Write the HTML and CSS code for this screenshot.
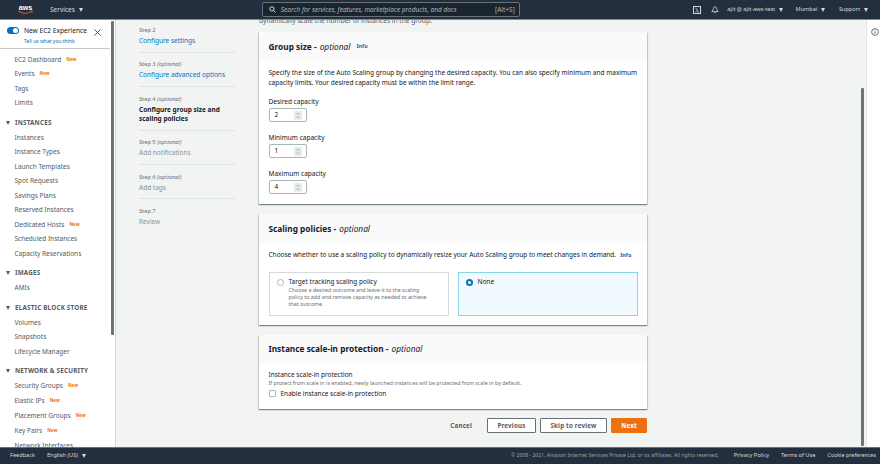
FILE: index.html
```html
<!DOCTYPE html>
<html lang="en">
<head>
<meta charset="utf-8">
<title>Create Auto Scaling group</title>
<link rel="stylesheet" href="styles.css">
</head>
<body>
<header class="topbar">
  <svg class="aws" viewBox="0 0 30 20" width="17" height="11"><text x="15" y="11" text-anchor="middle" class="aws-text">aws</text><path d="M2 13c7 5 17 5 24 .5" fill="none" stroke="#ec7211" stroke-width="1.600"/><path d="M24 12l4 .5-1.500 3.500" fill="none" stroke="#ec7211" stroke-width="1.200"/></svg>
  <span class="services">Services</span><i class="caret light"></i>
  <div class="search">
    <svg viewBox="0 0 12 12" width="7" height="7"><circle cx="5" cy="5" r="3.600" fill="none" stroke="#eee" stroke-width="1.500"/><path d="M8 8l3 3" stroke="#eee" stroke-width="1.600"/></svg>
    <span class="placeholder">Search for services, features, marketplace products, and docs</span>
    <span class="shortcut">[Alt+S]</span>
  </div>
  <div class="top-right">
    <svg viewBox="0 0 10 10" width="8" height="8"><rect x=".6" y=".6" width="8.800" height="8.800" fill="none" stroke="#d5dbdb" stroke-width="1.200"/><path d="M3 2.500l3 2.500-3 2.500M5 7.500h2.500" fill="none" stroke="#d5dbdb"/></svg>
    <svg class="bell" viewBox="0 0 10 10" width="8" height="8"><path d="M5 1C3.300 1 3 2.800 3 4L1 7h8L7 4c0-1.200-.3-3-2-3zM4 8.300h2" fill="none" stroke="#d5dbdb"/></svg>
    <span class="acct">ajit @ ajit-aws-test</span><i class="caret"></i>
    <span class="acct region">Mumbai</span><i class="caret"></i>
    <span class="acct support">Support</span><i class="caret"></i>
  </div>
</header>

<div class="body-row">
  <aside class="sidebar">
    <div class="sb-inner">
      <div class="exp">
        <div class="exp-row">
          <span class="toggle"><b></b></span>
          <span class="exp-title">New EC2 Experience</span>
          <svg class="close" viewBox="0 0 8 8" width="7" height="7"><path d="M.5 .5l7 7M7.500 .5l-7 7" stroke="#444" stroke-width="1"/></svg>
        </div>
        <a class="exp-link">Tell us what you think</a>
      </div>
      <nav class="nav">
        <a class="item">EC2 Dashboard<em>New</em></a>
        <a class="item tall">Events<em>New</em></a>
        <a class="item short">Tags</a>
        <a class="item">Limits</a>
        <h4 class="sec"><i class="caret dark"></i>INSTANCES</h4>
        <a class="item">Instances</a>
        <a class="item">Instance Types</a>
        <a class="item">Launch Templates</a>
        <a class="item">Spot Requests</a>
        <a class="item">Savings Plans</a>
        <a class="item">Reserved Instances</a>
        <a class="item">Dedicated Hosts<em>New</em></a>
        <a class="item">Scheduled Instances</a>
        <a class="item">Capacity Reservations</a>
        <h4 class="sec"><i class="caret dark"></i>IMAGES</h4>
        <a class="item">AMIs</a>
        <h4 class="sec"><i class="caret dark"></i>ELASTIC BLOCK STORE</h4>
        <a class="item">Volumes</a>
        <a class="item">Snapshots</a>
        <a class="item">Lifecycle Manager</a>
        <h4 class="sec"><i class="caret dark"></i>NETWORK &amp; SECURITY</h4>
        <a class="item tall">Security Groups<em>New</em></a>
        <a class="item tall">Elastic IPs<em>New</em></a>
        <a class="item tall">Placement Groups<em>New</em></a>
        <a class="item tall">Key Pairs<em>New</em></a>
        <a class="item">Network Interfaces</a>
      </nav>
    </div>
    <div class="sb-track"><div class="sb-thumb"></div></div>
  </aside>

  <main class="main">
    <ol class="steps">
      <li class="step"><small>Step 2</small><a class="link">Configure settings</a></li>
      <li class="step"><small>Step 3 <i>(optional)</i></small><a class="link">Configure advanced options</a></li>
      <li class="step"><small>Step 4 <i>(optional)</i></small><strong>Configure group size and scaling policies</strong></li>
      <li class="step"><small>Step 5 <i>(optional)</i></small><span class="off">Add notifications</span></li>
      <li class="step"><small>Step 6 <i>(optional)</i></small><span class="off">Add tags</span></li>
      <li class="step last"><small>Step 7</small><span class="off">Review</span></li>
    </ol>

    <div class="content">
      <p class="cut">dynamically scale the number of instances in the group.</p>

      <section class="card c1">
        <h2 class="card-h">Group size - <i>optional</i><a class="info">Info</a></h2>
        <div class="card-b">
          <p class="desc">Specify the size of the Auto Scaling group by changing the desired capacity. You can also specify minimum and maximum capacity limits. Your desired capacity must be within the limit range.</p>
          <label class="lbl">Desired capacity</label>
          <div class="num">2<svg class="spin" viewBox="0 0 8 9" width="8" height="9"><path d="M2.500 3.500L4 2l1.500 1.500M2.500 5.500L4 7l1.500-1.500" fill="none" stroke="#879596" stroke-width=".7"/></svg></div>
          <label class="lbl">Minimum capacity</label>
          <div class="num">1<svg class="spin" viewBox="0 0 8 9" width="8" height="9"><path d="M2.500 3.500L4 2l1.500 1.500M2.500 5.500L4 7l1.500-1.500" fill="none" stroke="#879596" stroke-width=".7"/></svg></div>
          <label class="lbl">Maximum capacity</label>
          <div class="num">4<svg class="spin" viewBox="0 0 8 9" width="8" height="9"><path d="M2.500 3.500L4 2l1.500 1.500M2.500 5.500L4 7l1.500-1.500" fill="none" stroke="#879596" stroke-width=".7"/></svg></div>
        </div>
      </section>

      <section class="card c2">
        <h2 class="card-h">Scaling policies - <i>optional</i></h2>
        <div class="card-b">
          <p class="desc one">Choose whether to use a scaling policy to dynamically resize your Auto Scaling group to meet changes in demand.<a class="info wide">Info</a></p>
          <div class="tiles">
            <div class="tile">
              <span class="radio"></span>
              <div>
                <div class="tile-t">Target tracking scaling policy</div>
                <div class="tile-d">Choose a desired outcome and leave it to the scaling policy to add and remove capacity as needed to achieve that outcome.</div>
              </div>
            </div>
            <div class="tile on">
              <span class="radio sel"></span>
              <div class="tile-t">None</div>
            </div>
          </div>
        </div>
      </section>

      <section class="card c3">
        <h2 class="card-h">Instance scale-in protection - <i>optional</i></h2>
        <div class="card-b">
          <div class="prot">Instance scale-in protection</div>
          <div class="hint">If protect from scale in is enabled, newly launched instances will be protected from scale in by default.</div>
          <div class="chk"><span class="box"></span>Enable instance scale-in protection</div>
        </div>
      </section>

      <div class="actions">
        <span class="cancel">Cancel</span>
        <span class="btn">Previous</span>
        <span class="btn skip">Skip to review</span>
        <span class="btn primary">Next</span>
      </div>
    </div>

    <div class="main-scroll"><div class="main-thumb"></div></div>
  </main>

  <aside class="help">
    <svg viewBox="0 0 10 10" width="8" height="8"><circle cx="5" cy="5" r="4.200" fill="none" stroke="#545b64" stroke-width="1.100"/><path d="M5 4.300v3M5 2.300v1" stroke="#545b64" stroke-width="1.200"/></svg>
  </aside>
</div>

<footer class="footer">
  <span class="f-link">Feedback</span>
  <span class="f-link lang">English (US)</span><i class="caret"></i>
  <span class="copy">© 2008 - 2021, Amazon Internet Services Private Ltd. or its affiliates. All rights reserved.</span>
  <span class="f-link">Privacy Policy</span>
  <span class="f-link">Terms of Use</span>
  <span class="f-link">Cookie preferences</span>
</footer>
</body>
</html>
```

FILE: styles.css
```css
* { box-sizing: border-box; }
html, body { margin: 0; height: 100%; overflow: hidden; }
body {
  width: 880px; height: 464px;
  display: flex; flex-direction: column;
  font-family: "Noto Sans", sans-serif;
  font-size: 7px; line-height: 9.500px;
  color: #16191f; background: #f2f3f3;
}
a { text-decoration: none; }
p, h2, h4, ol { margin: 0; padding: 0; }
li { list-style: none; }
i.caret {
  display: inline-block; width: 0; height: 0; flex: none;
  border-left: 2.500px solid transparent; border-right: 2.500px solid transparent;
  border-top: 4px solid #d5dbdb;
}
i.caret.light { margin-left: 4px; }
i.caret.dark { border-top-color: #545b64; margin-right: 5px; }

/* top bar */
.topbar {
  height: 20px; flex: none; background: #232f3e; border-bottom: 1px solid #7f8a94;
  display: flex; align-items: center; padding-left: 17px; color: #d5dbdb; z-index: 2;
}
.aws { flex: none; }
.aws-text { font: 700 13px "Liberation Sans", sans-serif; fill: #fff; }
.services { margin-left: 16px; font-size: 6.500px; }
.search {
  width: 258px; height: 15px; margin-left: 179px; flex: none;
  display: flex; align-items: center; padding: 0 4px 0 6px;
  background: #1b2530; border: 1px solid #687078; border-radius: 2px;
}
.placeholder { margin-left: 5px; font-style: italic; font-size: 6.500px; color: #aab7b8; flex: 1; white-space: nowrap; }
.shortcut { color: #aab7b8; font-size: 6.500px; }
.top-right { display: flex; align-items: center; margin-left: auto; padding-right: 12px; }
.top-right .bell { margin-left: 10px; }
.acct { font-size: 5.600px; margin-left: 8px; margin-right: 4px; white-space: nowrap; }
.acct.region { margin-left: 12.500px; }
.acct.support { margin-left: 13.500px; }

.body-row { flex: 1; display: flex; min-height: 0; }

/* sidebar */
.sidebar {
  width: 116px; flex: none; background: #fff; display: flex; overflow: hidden;
  border-right: 1px solid #d5dbdb;
}
.sb-inner { width: 110px; flex: none; }
.sb-track { width: 5px; background: #fff; padding: 1px 1px 0 1px; flex: none; }
.sb-thumb { height: 314px; background: #6e7378; border-radius: 1px; }
.exp { height: 29px; padding-top: 5px; border-bottom: 1px solid #c4c8c8; width: 110px; }
.exp-row { display: flex; align-items: center; padding-left: 7px; height: 11px; }
.toggle { width: 12px; height: 7px; border-radius: 4px; background: #0073bb; display: flex; justify-content: flex-end; align-items: center; padding-right: 1px; flex: none; }
.toggle b { width: 5px; height: 5px; border-radius: 50%; background: #fff; }
.exp-title { margin-left: 5px; font-size: 6.600px; color: #16191f; white-space: nowrap; }
.close { margin-left: 7px; margin-top: 3px; flex: none; }
.exp-link { display: block; margin: 1px 0 0 24px; font-size: 5px; line-height: 8px; color: #0073bb; white-space: nowrap; }
.nav { padding-top: 3px; }
.item { display: flex; align-items: center; height: 14.500px; padding-left: 14.500px; color: #545b64; font-size: 6.500px; white-space: nowrap; }
.item.tall { height: 15px; }
.item.short { height: 14px; }
.item em { font-style: normal; font-weight: 700; font-size: 4.500px; color: #ec7211; margin-left: 5px; }
.sec { display: flex; align-items: center; height: 15px; margin-top: 5px; padding-left: 6px; font-size: 6.300px; font-weight: 700; letter-spacing: .2px; color: #545b64; white-space: nowrap; }

/* main area */
.main { flex: 1; display: flex; min-width: 0; overflow: hidden; }
.steps { width: 97px; margin-left: 23px; flex: none; padding-top: 6px; }
.step { border-bottom: 1px solid #e1e4e4; padding-bottom: 6px; margin-bottom: 7.700px; color: #16191f; font-size: 6.500px; line-height: 9.600px; }
.step.last { border: 0; }
.step small { display: block; font-size: 5.700px; line-height: 9px; color: #687078; margin-bottom: 1px; }
.step .link { color: #0073bb; }
.step strong { display: block; font-weight: 700; font-size: 6.500px; }
.step .off { color: #879596; }

.content { width: 388px; margin-left: 23px; flex: none; }
.cut { height: 12px; font-size: 6.600px; line-height: 1px; color: #545b64; overflow: hidden; white-space: nowrap; }
.card { background: #fff; box-shadow: 0 1px 1px rgba(0,28,36,.3), 1px 1px 1px rgba(0,28,36,.15), -1px 1px 1px rgba(0,28,36,.15); margin-bottom: 10px; }
.card-h { height: 29px; display: flex; align-items: center; padding-left: 9.500px; background: #fafafa; font-size: 8.300px; font-weight: 700; white-space: pre; color: #16191f; }
.card-h i { font-weight: 400; margin-left: 1px; }
.info { font-size: 5.500px; font-weight: 700; color: #0073bb; margin-left: 6px; font-style: normal; }
.info.wide { margin-left: 4px; }
.card-b { padding: 7px 9.500px 0; }
.desc { font-size: 6.500px; line-height: 9.600px; color: #16191f; margin-bottom: 10px; }
.lbl { display: block; font-size: 6.500px; line-height: 9px; margin-bottom: 2px; color: #16191f; }
.num {
  width: 38px; height: 14px; margin-bottom: 11px; padding-left: 5px;
  display: flex; align-items: center; justify-content: space-between;
  border: 1px solid #aab7b8; border-radius: 2px; font-size: 6.500px; background: #fff;
}
.spin { margin-right: 4px; background: #e9ebeb; flex: none; }
.c1 { height: 172px; }
.c2 { height: 111px; }
.c3 { height: 74px; }
.c3 .card-h { height: 28px; }
.desc.one { margin-bottom: 11px; white-space: nowrap; }
.tiles { display: flex; gap: 9px; }
.tile { flex: 1; height: 44px; border: 1px solid #d5dbdb; display: flex; padding: 4px 14px 0 7px; gap: 5px; }
.tile.on { border-color: #8ad5ec; background: #f1faff; }
.radio { width: 7px; height: 7px; margin-top: 2px; border-radius: 50%; border: 1px solid #aab7b8; background: #fff; flex: none; }
.radio.sel { border: 2px solid #0073bb; }
.tile-t { font-size: 6.500px; line-height: 9px; color: #16191f; }
.tile-d { font-size: 5.300px; line-height: 7.200px; color: #687078; margin-top: 1px; }
.prot { font-size: 6.500px; line-height: 9px; }
.hint { font-size: 5.300px; line-height: 8px; color: #687078; white-space: nowrap; }
.chk { display: flex; align-items: center; font-size: 6.500px; line-height: 9px; color: #16191f; margin-top: 2px; }
.box { width: 7px; height: 7px; border: 1px solid #aab7b8; border-radius: 1px; margin-right: 5px; }
.actions { display: flex; align-items: center; justify-content: flex-end; gap: 4px; margin-top: -1px; }
.cancel { font-size: 6.200px; font-weight: 700; color: #545b64; margin-right: 11px; letter-spacing: .2px; }
.btn { height: 15px; display: flex; align-items: center; justify-content: center; width: 49px; border: 1px solid #687078; background: #fff; border-radius: 1px; font-size: 6.200px; font-weight: 700; color: #545b64; letter-spacing: .2px; }
.btn.skip { width: 67px; }
.btn.primary { width: 36px; background: #ec7211; border-color: #ec7211; color: #fff; }

.main-scroll { margin-left: auto; margin-right: 1px; width: 5px; padding: 68px 1px 0; flex: none; }
.main-thumb { height: 358px; background: #6e7378; border-radius: 1px; }

.help { width: 14px; flex: none; background: #fff; border-left: 1px solid #e1e4e4; padding: 8px 0 0 4px; }

/* footer */
.footer {
  height: 17px; flex: none; background: #232f3e; border-top: 1px solid #687078;
  display: flex; align-items: center; padding-left: 10px; color: #d5dbdb; font-size: 5.600px;
}
.f-link { white-space: nowrap; margin-right: 12px; }
.footer i.caret { margin-left: -8px; }
.copy { margin-left: auto; margin-right: 15px; font-size: 5.100px; color: #95a5a6; white-space: nowrap; }
.footer .f-link:last-child { margin-right: 4px; font-size: 5.400px; }
```
